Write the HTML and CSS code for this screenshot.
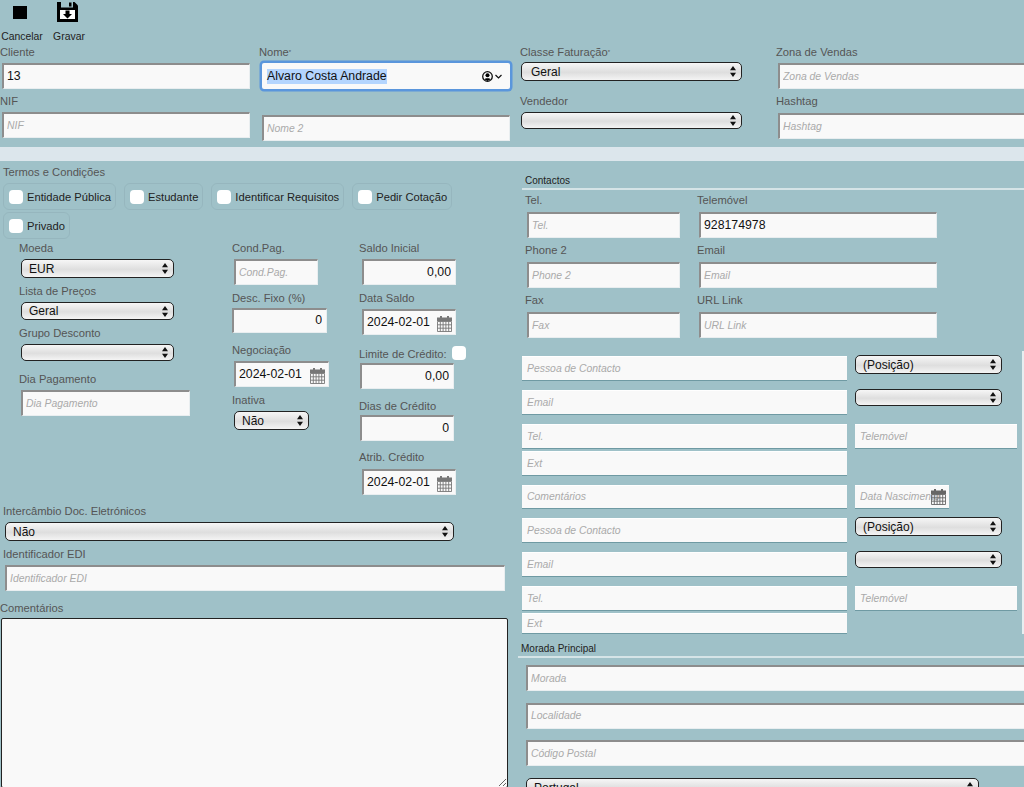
FILE: index.html
```html
<!DOCTYPE html>
<html lang="pt">
<head>
  <meta charset="UTF-8">
  <title>Cliente 13</title>
  <meta name="viewport" content="width=device-width, initial-scale=1">
  <link rel="stylesheet" href="styles.css">
</head>
<body>
  <svg class="defs" width="0" height="0" aria-hidden="true">
    <symbol id="updown" viewBox="0 0 6 11">
      <path d="M3 0L6 4.2H0ZM3 11L0 6.8H6Z"/>
    </symbol>
    <symbol id="cal" viewBox="0 0 15 16">
      <path d="M3 0h2v2H3zM10 0h2v2h-2zM0 1.5h15V5H0z"/>
      <path d="M.5 5.5h14v10H.5zM.5 8.8h14M.5 12.2h14M3.3 5.5v10M6.1 5.5v10M8.9 5.5v10M11.7 5.5v10" fill="none" stroke="currentColor" stroke-width=".9"/>
    </symbol>
  </svg>

  <div class="toolbar">
    <button class="tool tool-cancel" type="button">
      <span class="tool-icon"><svg width="14" height="13" viewBox="0 0 14 13"><rect width="14" height="13"/></svg></span>
      Cancelar
    </button>
    <button class="tool" type="button">
      <span class="tool-icon">
        <svg width="21" height="20" viewBox="0 0 21 20">
          <path d="M0 0H17.5L21 3.5V20H0Z"/>
          <path class="disk-slot" d="M4 0H16V5.500H4Z"/>
          <path d="M12 .5H14.500V4.500H12Z"/>
          <path class="disk-label" d="M3 8H18V17H3Z"/>
          <path d="M8.500 8.500H12.500V12H15L10.500 16.500L6 12H8.500Z"/>
        </svg>
      </span>
      Gravar
    </button>
  </div>

  <div class="head">
    <div class="field">
      <label>Cliente</label>
      <input class="input ml-2 w-248" type="text" value="13">
    </div>
    <div class="field">
      <label>Nome<sup>*</sup></label>
      <div class="input name-input">
        <span class="picked">Alvaro Costa Andrade</span>
        <svg width="21" height="11" viewBox="0 0 21 11">
          <circle cx="5.500" cy="5.500" r="4.800" fill="none" stroke="#111" stroke-width="1.300"/>
          <circle cx="5.500" cy="4.300" r="2"/>
          <path d="M2.300 8.300C3 6.800 8 6.800 8.700 8.300L5.500 10Z"/>
          <path d="M13.500 4L16.500 7L19.500 4" fill="none" stroke="#111" stroke-width="1.200"/>
        </svg>
      </div>
    </div>
    <div class="field tight">
      <label>Classe Faturação<sup>*</sup></label>
      <div class="select ml-1 w-221">
        <select class="pad-9"><option>Geral</option></select>
        <svg class="updown"><use href="#updown"/></svg>
      </div>
    </div>
    <div class="field">
      <label>Zona de Vendas</label>
      <input class="input ml-2 w-260" type="text" placeholder="Zona de Vendas">
    </div>

    <div class="field">
      <label>NIF</label>
      <input class="input ml-2 w-248" type="text" placeholder="NIF">
    </div>
    <div class="field wide-gap">
      <label></label>
      <input class="input ml-3 w-248" type="text" placeholder="Nome 2">
    </div>
    <div class="field">
      <label>Vendedor</label>
      <div class="select ml-1 w-221 short">
        <select><option></option></select>
        <svg class="updown"><use href="#updown"/></svg>
      </div>
    </div>
    <div class="field loose">
      <label>Hashtag</label>
      <input class="input ml-2 w-260" type="text" placeholder="Hashtag">
    </div>
  </div>

  <div class="band"></div>

  <div class="columns">
    <div class="left">
      <label class="terms-title">Termos e Condições</label>
      <div class="chips">
        <label class="chip"><input type="checkbox">Entidade Pública</label>
        <label class="chip"><input type="checkbox">Estudante</label>
        <label class="chip"><input type="checkbox">Identificar Requisitos</label>
        <label class="chip"><input type="checkbox">Pedir Cotação</label>
        <label class="chip"><input type="checkbox">Privado</label>
      </div>

      <div class="trio">
        <div>
          <div class="field">
            <label>Moeda</label>
            <div class="select ml-2 w-153">
              <select><option>EUR</option></select>
              <svg class="updown"><use href="#updown"/></svg>
            </div>
          </div>
          <div class="field">
            <label>Lista de Preços</label>
            <div class="select ml-2 w-153 mid">
              <select><option>Geral</option></select>
              <svg class="updown"><use href="#updown"/></svg>
            </div>
          </div>
          <div class="field gap-11">
            <label>Grupo Desconto</label>
            <div class="select ml-2 w-153 short">
              <select><option></option></select>
              <svg class="updown"><use href="#updown"/></svg>
            </div>
          </div>
          <div class="field">
            <label>Dia Pagamento</label>
            <input class="input ml-2 w-169" type="text" placeholder="Dia Pagamento">
          </div>
        </div>

        <div>
          <div class="field">
            <label>Cond.Pag.</label>
            <input class="input ml-2 w-84" type="text" placeholder="Cond.Pag.">
          </div>
          <div class="field tight gap-10">
            <label>Desc. Fixo (%)</label>
            <input class="input num w-95 h-25" type="text" value="0">
          </div>
          <div class="field">
            <label>Negociação</label>
            <div class="date ml-2 w-95">
              <input class="input" type="text" value="2024-02-01">
              <svg class="cal"><use href="#cal"/></svg>
            </div>
          </div>
          <div class="field">
            <label>Inativa</label>
            <div class="select ml-2 w-75">
              <select><option>Não</option></select>
              <svg class="updown"><use href="#updown"/></svg>
            </div>
          </div>
        </div>

        <div>
          <div class="field">
            <label>Saldo Inicial</label>
            <input class="input num ml-3 w-94" type="text" value="0,00">
          </div>
          <div class="field gap-12">
            <label>Data Saldo</label>
            <div class="date ml-3 w-94">
              <input class="input" type="text" value="2024-02-01">
              <svg class="cal"><use href="#cal"/></svg>
            </div>
          </div>
          <div class="field closer gap-10">
            <div class="label-row">
              <label>Limite de Crédito:</label>
              <input class="check" type="checkbox">
            </div>
            <input class="input num ml-1 w-94" type="text" value="0,00">
          </div>
          <div class="field closer gap-9">
            <label>Dias de Crédito</label>
            <input class="input num ml-1 w-94" type="text" value="0">
          </div>
          <div class="field loose">
            <label>Atrib. Crédito</label>
            <div class="date ml-3 w-94">
              <input class="input" type="text" value="2024-02-01">
              <svg class="cal"><use href="#cal"/></svg>
            </div>
          </div>
        </div>
      </div>

      <div class="edi">
        <div class="field">
          <label>Intercâmbio Doc. Eletrónicos</label>
          <div class="select ml-2 w-449">
            <select><option>Não</option></select>
            <svg class="updown"><use href="#updown"/></svg>
          </div>
        </div>
        <div class="field gap-10">
          <label>Identificador EDI</label>
          <input class="input ml-2 w-500" type="text" placeholder="Identificador EDI">
        </div>
      </div>
      <label class="notes-label">Comentários</label>
      <textarea class="notes"></textarea>
    </div>

    <div class="right">
      <div class="section-title">Contactos</div>
      <div class="contacts">
        <div class="field">
          <label>Tel.</label>
          <input class="input ml-2 w-153" type="text" placeholder="Tel.">
        </div>
        <div class="field">
          <label>Telemóvel</label>
          <input class="input ml-2 w-238" type="text" value="928174978">
        </div>
        <div class="field">
          <label>Phone 2</label>
          <input class="input ml-2 w-153" type="text" placeholder="Phone 2">
        </div>
        <div class="field">
          <label>Email</label>
          <input class="input ml-2 w-238" type="text" placeholder="Email">
        </div>
        <div class="field">
          <label>Fax</label>
          <input class="input ml-2 w-153" type="text" placeholder="Fax">
        </div>
        <div class="field">
          <label>URL Link</label>
          <input class="input ml-2 w-238" type="text" placeholder="URL Link">
        </div>
      </div>

      <div class="people-wrap">
        <div class="people">
          <input class="flat" type="text" placeholder="Pessoa de Contacto">
          <div class="select w-147">
            <select><option>(Posição)</option></select>
            <svg class="updown"><use href="#updown"/></svg>
          </div>
          <input class="flat" type="text" placeholder="Email">
          <div class="select w-147 short">
            <select><option></option></select>
            <svg class="updown"><use href="#updown"/></svg>
          </div>
          <div>
            <input class="flat" type="text" placeholder="Tel.">
            <input class="flat ext" type="text" placeholder="Ext">
          </div>
          <input class="flat small-phone" type="text" placeholder="Telemóvel">
          <input class="flat h-24" type="text" placeholder="Comentários">
          <div class="date w-94 flat-date">
            <input class="flat h-24" type="text" placeholder="Data Nascimento">
            <svg class="cal"><use href="#cal"/></svg>
          </div>
          <input class="flat" type="text" placeholder="Pessoa de Contacto">
          <div class="select w-147">
            <select><option>(Posição)</option></select>
            <svg class="updown"><use href="#updown"/></svg>
          </div>
          <input class="flat" type="text" placeholder="Email">
          <div class="select w-147 short">
            <select><option></option></select>
            <svg class="updown"><use href="#updown"/></svg>
          </div>
          <div>
            <input class="flat" type="text" placeholder="Tel.">
            <input class="flat ext h-21" type="text" placeholder="Ext">
          </div>
          <input class="flat small-phone" type="text" placeholder="Telemóvel">
        </div>
        <div class="edge"></div>
      </div>

      <div class="section-title morada-title">Morada Principal</div>
      <div class="morada">
        <input class="input" type="text" placeholder="Morada">
        <input class="input" type="text" placeholder="Localidade">
        <input class="input" type="text" placeholder="Código Postal">
        <div class="select w-453">
          <select><option>Portugal</option></select>
          <svg class="updown"><use href="#updown"/></svg>
        </div>
      </div>
    </div>
  </div>
</body>
</html>
```

FILE: styles.css
```css
* {
  box-sizing: border-box;
}
html, body {
  height: 787px;
  overflow: hidden;
}
body {
  margin: 0;
  background: #9fc1c8;
  color: #555;
  font-family: "Liberation Sans", Arial, sans-serif;
  font-size: 11.2px;
}
.defs {
  position: absolute;
}

/* toolbar */
.toolbar {
  display: flex;
  align-items: flex-start;
  gap: 10px;
  height: 45px;
  padding-left: 1px;
}
.tool {
  display: block;
  width: 42px;
  padding: 0;
  border: 0;
  background: none;
  color: #222;
  font: 10.4px/12px "Liberation Sans", Arial, sans-serif;
  text-align: center;
}
.tool + .tool {
  width: 32px;
}
.tool-icon {
  display: flex;
  align-items: center;
  justify-content: center;
  height: 24px;
  margin-bottom: 7px;
}
.tool-cancel .tool-icon svg {
  margin: 1px 4px 0 0;
}
.tool + .tool .tool-icon svg {
  margin-left: -4px;
}
.disk-slot {
  fill: #9fc1c8;
}
.disk-label {
  fill: #fff;
}

/* fields */
label {
  display: block;
  height: 14px;
  line-height: 14px;
  white-space: nowrap;
}
sup {
  font-size: 6px;
  line-height: 0;
  vertical-align: 2px;
}
.field {
  margin-bottom: 6px;
}
.field > label {
  margin-bottom: 4px;
}
.field.tight > label {
  margin-bottom: 3px;
}
.field.closer > label,
.label-row {
  margin-bottom: 2px;
}
.field.loose > label {
  margin-bottom: 5px;
}
.field.wide-gap > label {
  margin-bottom: 7px;
}
.field.gap-9 { margin-bottom: 9px; }
.field.gap-10 { margin-bottom: 10px; }
.field.gap-11 { margin-bottom: 11px; }
.field.gap-12 { margin-bottom: 12px; }

.input {
  display: block;
  width: 100%;
  height: 26px;
  padding: 0 4px 2px 3px;
  border-style: solid;
  border-width: 2px 1px 1px 2px;
  border-color: #8d8d8d #e9eef0 #e9eef0 #8d8d8d;
  border-radius: 0;
  outline: 0;
  background: #f9f9f9;
  color: #111;
  font: 12.3px "Liberation Sans", Arial, sans-serif;
}
.input::placeholder,
.flat::placeholder {
  color: #aaa;
  font-size: 10.4px;
  font-style: italic;
}
.num {
  text-align: right;
}
.h-25 { height: 25px; }
.h-24 { height: 24px !important; }
.h-21 { height: 21px !important; }

.ml-1 { margin-left: 1px; }
.ml-2 { margin-left: 2px; }
.ml-3 { margin-left: 3px; }
.w-75 { width: 75px; }
.w-84 { width: 84px; }
.w-94 { width: 94px; }
.w-95 { width: 95px; }
.w-147 { width: 147px; }
.w-153 { width: 153px; }
.w-169 { width: 169px; }
.w-221 { width: 221px; }
.w-238 { width: 238px; }
.w-248 { width: 248px; }
.w-260 { width: 260px; }
.w-449 { width: 449px; }
.w-453 { width: 453px; }
.w-500 { width: 500px; }

.name-input {
  display: flex;
  align-items: center;
  justify-content: space-between;
  width: 248px;
  margin-left: 3px;
  padding: 0 7px 0 3px;
  border: 0;
  box-shadow: 0 0 0 2.500px #5a96dc;
  border-radius: 2px;
}
.name-input .picked {
  margin-left: 2px;
  background: #b4d5fe;
  line-height: 15px;
}

.select {
  position: relative;
  height: 19px;
}
.select.mid { height: 18px; }
.select.short { height: 17px; }
.select select {
  display: block;
  width: 100%;
  height: 100%;
  padding: 0 14px 0 7px;
  appearance: none;
  border: 1px solid #222;
  border-radius: 5px;
  background: linear-gradient(#f6f6f6, #dedede 55%, #f4f4f4);
  color: #111;
  font: 12px "Liberation Sans", Arial, sans-serif;
}
.select select.pad-9 {
  padding-left: 9px;
}
.updown {
  position: absolute;
  top: 50%;
  right: 6px;
  width: 6px;
  height: 11px;
  margin-top: -5.500px;
  fill: #111;
}

.date {
  position: relative;
}
.cal {
  position: absolute;
  top: 7px;
  right: 4px;
  width: 15px;
  height: 16px;
  color: #777;
  fill: #777;
}
.flat-date .cal {
  top: 5px;
  right: 3px;
  color: #666;
  fill: #666;
}

/* band between header and body */
.head {
  display: grid;
  grid-template-columns: 259px 261px 256px 1fr;
  column-gap: 0;
}
.head .field {
  margin-bottom: 5px;
  min-width: 0;
}
.head .field:nth-child(n+5) {
  margin-bottom: 6px;
}
.band {
  height: 14px;
  background: #dce6ec;
}
.columns {
  display: flex;
}

/* left side */
.left {
  width: 515px;
  flex: none;
  padding-top: 4px;
}
.terms-title {
  margin: 0 0 4px 3px;
}
.chips {
  display: flex;
  flex-wrap: wrap;
  gap: 2px 8px;
  padding-left: 3px;
}
.chip {
  display: flex;
  align-items: center;
  gap: 4px;
  height: 27px;
  padding: 0 4px 0 5px;
  border: 1px solid rgba(130, 160, 170, 0.3);
  border-radius: 6px;
  color: #222;
  font-size: 11.200px;
}
.chip input,
.check {
  width: 14px;
  height: 14px;
  margin: 0;
  appearance: none;
  border-radius: 4px;
  background: #fff;
}
.label-row {
  display: flex;
  gap: 5px;
  height: 14px;
}
.check {
  margin-top: -1px;
}
.trio {
  display: grid;
  grid-template-columns: 213px 127px 1fr;
  margin: 2px 0 0 19px;
}
.trio .field:last-child {
  margin-bottom: 0;
}
.edi {
  margin-top: 9px;
  padding-left: 3px;
}
.edi .select,
.edi .input {
  margin-left: 2px;
}
.notes-label {
  margin-bottom: 3px;
}
.notes {
  display: block;
  width: 507px;
  height: 170px;
  margin-left: 1px;
  border: 1px solid #222;
  border-radius: 2px;
  outline: 0;
  background: #f9f9f9;
}

/* right side */
.right {
  flex: 1;
  min-width: 0;
}
.section-title {
  height: 15px;
  margin: 14px 0 3px 7px;
  padding-left: 3px;
  border-bottom: 2px solid #d5e4e7;
  color: #222;
  font-size: 10px;
  line-height: 12px;
}
.contacts {
  display: grid;
  grid-template-columns: 172px 1fr;
  padding-left: 10px;
}
.contacts .field {
  margin-bottom: 5px;
}
.contacts .field > label {
  margin-bottom: 5px;
}
.contacts .field:nth-last-child(-n+2) {
  margin-bottom: 0;
}
.people-wrap {
  display: flex;
  justify-content: space-between;
  margin-top: 17px;
  padding-left: 7px;
}
.people {
  display: grid;
  grid-template-columns: 333px 163px;
  row-gap: 8px;
  align-items: start;
}
.flat {
  display: block;
  width: 325px;
  height: 25px;
  margin-top: 1px;
  padding: 0 5px 2px;
  border: 0;
  border-top: 1px solid #fff;
  border-bottom: 1px solid #6f9aa3;
  outline: 0;
  background: #f9f9f9;
  font: 12px "Liberation Sans", Arial, sans-serif;
}
.ext {
  margin-top: 2px;
}
.small-phone {
  width: 162px;
}
.flat-date .flat {
  width: 100%;
}
.edge {
  width: 2px;
  margin-top: -4px;
  background: #e6eef0;
}
.morada-title {
  margin: 9px 0 7px 3px;
  padding-left: 3px;
}
.morada {
  padding-left: 11px;
}
.morada .input {
  width: 520px;
  margin-bottom: 11.700px;
}
```
